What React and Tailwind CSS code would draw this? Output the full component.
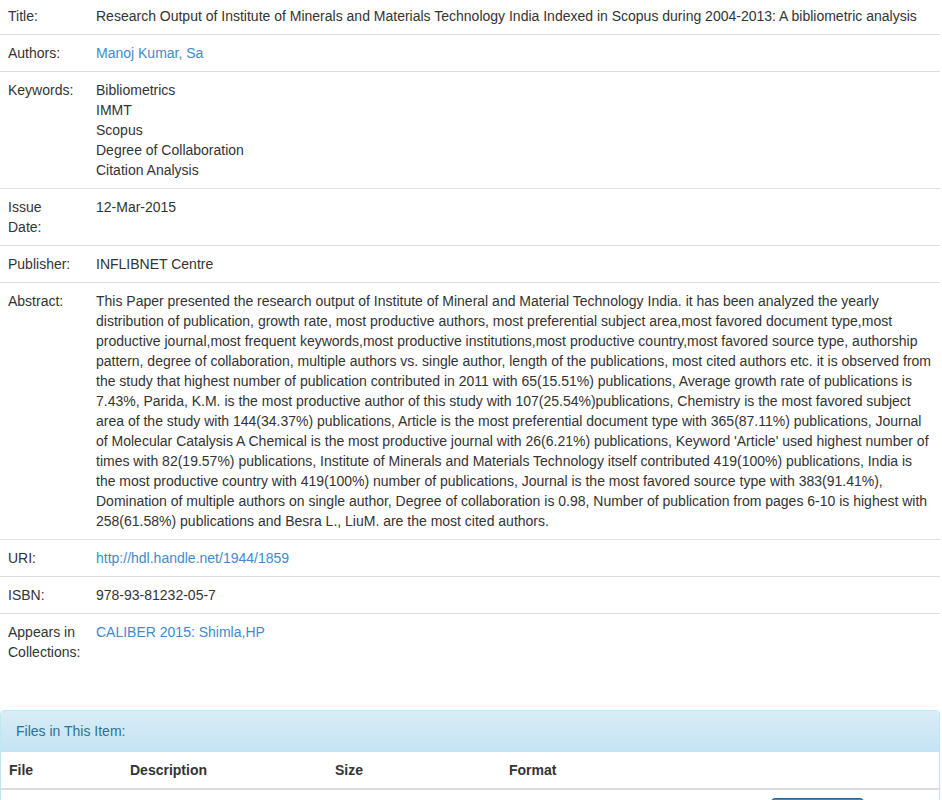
import React from 'react'

const rows = [
  { label: 'Title:', value: 'Research Output of Institute of Minerals and Materials Technology India Indexed in Scopus during 2004-2013: A bibliometric analysis' },
  { label: 'Authors:', link: true, value: 'Manoj Kumar, Sa' },
  { label: 'Keywords:', list: ['Bibliometrics', 'IMMT', 'Scopus', 'Degree of Collaboration', 'Citation Analysis'] },
  { label: 'Issue Date:', value: '12-Mar-2015' },
  { label: 'Publisher:', value: 'INFLIBNET Centre' },
  {
    label: 'Abstract:',
    value:
      "This Paper presented the research output of Institute of Mineral and Material Technology India. it has been analyzed the yearly distribution of publication, growth rate, most productive authors, most preferential subject area,most favored document type,most productive journal,most frequent keywords,most productive institutions,most productive country,most favored source type, authorship pattern, degree of collaboration, multiple authors vs. single author, length of the publications, most cited authors etc. it is observed from the study that highest number of publication contributed in 2011 with 65(15.51%) publications, Average growth rate of publications is 7.43%, Parida, K.M. is the most productive author of this study with 107(25.54%)publications, Chemistry is the most favored subject area of the study with 144(34.37%) publications, Article is the most preferential document type with 365(87.11%) publications, Journal of Molecular Catalysis A Chemical is the most productive journal with 26(6.21%) publications, Keyword 'Article' used highest number of times with 82(19.57%) publications, Institute of Minerals and Materials Technology itself contributed 419(100%) publications, India is the most productive country with 419(100%) number of publications, Journal is the most favored source type with 383(91.41%), Domination of multiple authors on single author, Degree of collaboration is 0.98, Number of publication from pages 6-10 is highest with 258(61.58%) publications and Besra L., LiuM. are the most cited authors.",
  },
  { label: 'URI:', link: true, value: 'http://hdl.handle.net/1944/1859' },
  { label: 'ISBN:', value: '978-93-81232-05-7' },
  { label: 'Appears in Collections:', link: true, value: 'CALIBER 2015: Shimla,HP' },
]

export default function App() {
  return (
    <div className="w-[940px] text-[14px] leading-[20px] text-[#333] bg-white" style={{ fontFamily: '"Liberation Sans", Arial, sans-serif' }}>
      <table className="w-[940px] -mt-[3px] border-collapse table-fixed">
        <tbody>
          {rows.map((r, i) => (
            <tr key={i} className="border-t border-[#ddd]">
              <td className="w-[88px] pl-2 pr-[10px] py-2 align-top">{r.label}</td>
              <td className="p-2 align-top">
                {r.list ? (
                  r.list.map((k) => <div key={k}>{k}</div>)
                ) : r.link ? (
                  <a className="text-[#428bca]">{r.value}</a>
                ) : (
                  r.value
                )}
              </td>
            </tr>
          ))}
        </tbody>
      </table>

      <div className="mt-[40px] border border-[#bce8f1] rounded-[4px] overflow-hidden">
        <div className="px-[15px] py-[10px] border-b border-[#bce8f1] bg-gradient-to-b from-[#d9edf7] to-[#c4e3f3] text-[#31708f]">
          Files in This Item:
        </div>
        <table className="w-full border-collapse">
          <thead>
            <tr className="border-b-2 border-[#ddd]">
              <th className="w-[121px] p-2 text-left font-bold">File</th>
              <th className="w-[205px] p-2 text-left font-bold">Description</th>
              <th className="w-[174px] p-2 text-left font-bold">Size</th>
              <th className="w-[262px] p-2 text-left font-bold">Format</th>
              <th className="p-2"></th>
            </tr>
          </thead>
          <tbody>
            <tr>
              <td className="p-2 align-middle text-[#428bca]">84.pdf</td>
              <td className="p-2 align-middle"></td>
              <td className="p-2 align-middle">1.08 MB</td>
              <td className="p-2 align-middle">Adobe PDF</td>
              <td className="p-2 align-top">
                <span className="inline-block w-[93px] px-3 py-[6px] rounded-[4px] border border-[#2b669a] bg-gradient-to-b from-[#428bca] to-[#2d6ca2] text-white text-center">
                  View/Open
                </span>
              </td>
            </tr>
          </tbody>
        </table>
      </div>
    </div>
  )
}
